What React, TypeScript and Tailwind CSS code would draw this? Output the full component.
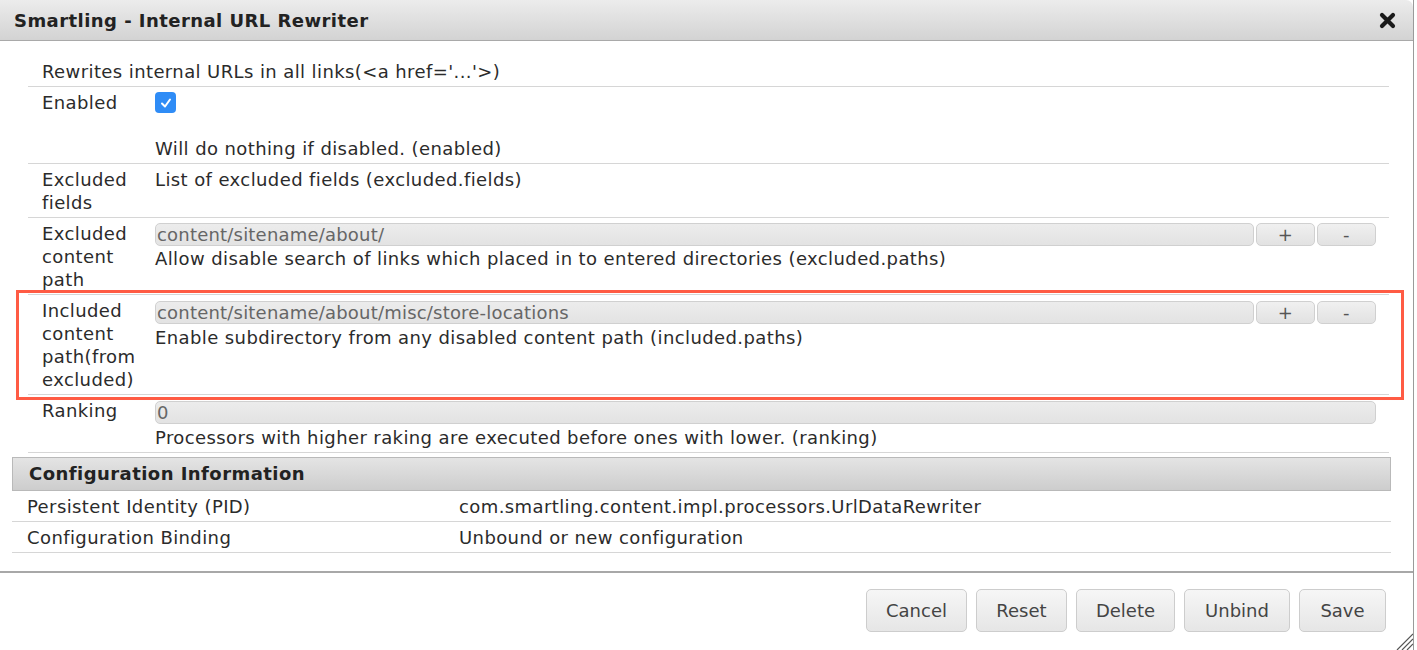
import React from "react";

const font = { fontFamily: '"DejaVu Sans", Verdana, sans-serif' };

function Input({ value }: { value: string }) {
  return (
    <div className="h-[23px] flex-1 rounded-[5px] border border-[#d0d0d0] bg-gradient-to-b from-[#ececec] to-[#e3e3e3] px-[1px] text-[18px] leading-[21px] tracking-[0.2px] text-[#666] whitespace-nowrap overflow-hidden">
      {value}
    </div>
  );
}

function SmallBtn({ label }: { label: string }) {
  return (
    <div className="h-[23px] w-[59px] rounded-[5px] border border-[#d0d0d0] bg-gradient-to-b from-[#f0f0f0] to-[#e2e2e2] text-center text-[18px] leading-[21px] text-[#555]">
      {label}
    </div>
  );
}

function Row({
  label,
  children,
  className = "",
}: {
  label: React.ReactNode;
  children: React.ReactNode;
  className?: string;
}) {
  return (
    <div className={"relative flex border-b border-[#d6d6d6] pt-[4px] pb-[3px] " + className}>
      <div className="w-[127px] shrink-0 pl-[14px] pr-[2px] whitespace-nowrap">{label}</div>
      <div className="flex-1 pr-[13px]">{children}</div>
    </div>
  );
}

function FooterBtn({ label, w }: { label: string; w: string }) {
  return (
    <div
      className={
        "h-[43px] rounded-[5px] border border-[#cdcdcd] bg-gradient-to-b from-[#f6f6f6] to-[#e6e6e6] text-center text-[18px] leading-[41px] text-[#444] " +
        w
      }
    >
      {label}
    </div>
  );
}

export default function App() {
  return (
    <div
      className="h-[650px] w-[1417px] overflow-hidden bg-white text-[18px] leading-[23px] tracking-[0.4px] text-[#2b2b2b]"
      style={font}
    >
      <div className="relative h-[650px] w-[1414px] border-r border-[#9a9a9a]">
        {/* Title bar */}
        <div className="flex h-[41px] items-center justify-between rounded-tr-[7px] border-b border-[#a9a9a9] bg-gradient-to-b from-[#ececec] to-[#d3d3d3] pl-[14px] pr-[17px]">
          <div className="text-[18px] font-bold tracking-[0.45px] text-[#222]">Smartling - Internal URL Rewriter</div>
          <svg width="17" height="17" viewBox="0 0 17 17">
            <path d="M3 3 L14 14 M14 3 L3 14" stroke="#1a1a1a" strokeWidth="4.2" strokeLinecap="round" />
          </svg>
        </div>

        {/* Properties table */}
        <div className="ml-[28px] mr-[24px] mt-[15px]">
          <Row label={null}>
            <div className="-ml-[113px]">Rewrites internal URLs in all links(&lt;a href='...'&gt;)</div>
          </Row>
          <Row label="Enabled">
            <div className="flex h-[23px] items-center">
              <div className="flex h-[21px] w-[21px] items-center justify-center rounded-[4px] bg-[#2f8cf6]">
                <svg width="14" height="14" viewBox="0 0 14 14">
                  <path d="M3 7.5 L6 10.5 L11 3.5" fill="none" stroke="#fff" strokeWidth="2" strokeLinecap="round" strokeLinejoin="round" />
                </svg>
              </div>
            </div>
            <div className="h-[23px]" />
            <div>Will do nothing if disabled. (enabled)</div>
          </Row>
          <Row label={<>Excluded<br />fields</>}>
            <div>List of excluded fields (excluded.fields)</div>
          </Row>
          <Row label={<>Excluded<br />content<br />path</>}>
            <div className="flex gap-[2px] py-[1px]">
              <Input value="content/sitename/about/" />
              <SmallBtn label="+" />
              <SmallBtn label="-" />
            </div>
            <div>Allow disable search of links which placed in to entered directories (excluded.paths)</div>
          </Row>
          <Row label={<>Included<br />content<br />path(from<br />excluded)</>}>
            <div className="flex gap-[2px] py-[2px]">
              <Input value="content/sitename/about/misc/store-locations" />
              <SmallBtn label="+" />
              <SmallBtn label="-" />
            </div>
            <div>Enable subdirectory from any disabled content path (included.paths)</div>
            <div className="pointer-events-none absolute -left-[12px] -right-[15px] -top-[5px] bottom-[-6px] border-[3px] border-[#ff5b44]" />
          </Row>
          <Row label="Ranking">
            <div className="flex py-[2px]">
              <Input value="0" />
            </div>
            <div>Processors with higher raking are executed before ones with lower. (ranking)</div>
          </Row>
        </div>

        {/* Configuration information */}
        <div className="ml-[12px] mr-[22px] mt-[4px]">
          <div className="h-[34px] border border-[#b9b9b9] bg-gradient-to-b from-[#e4e4e4] to-[#cdcdcd] pl-[16px] text-[18px] font-bold leading-[32px] tracking-[0.45px] text-[#222]">
            Configuration Information
          </div>
          <div className="flex h-[31px] items-center border-b border-[#d6d6d6]">
            <div className="w-[447px] pl-[15px]">Persistent Identity (PID)</div>
            <div>com.smartling.content.impl.processors.UrlDataRewriter</div>
          </div>
          <div className="flex h-[31px] items-center border-b border-[#d6d6d6]">
            <div className="w-[447px] pl-[15px]">Configuration Binding</div>
            <div>Unbound or new configuration</div>
          </div>
        </div>

        {/* Footer */}
        <div className="mt-[18px] border-t-2 border-[#a8a8a8] pt-[16px]">
          <div className="flex justify-end gap-[9px] pr-[27px] tracking-normal">
            <FooterBtn label="Cancel" w="w-[101px]" />
            <FooterBtn label="Reset" w="w-[91px]" />
            <FooterBtn label="Delete" w="w-[99px]" />
            <FooterBtn label="Unbind" w="w-[106px]" />
            <FooterBtn label="Save" w="w-[87px]" />
          </div>
        </div>

        {/* resize grip */}
        <svg className="absolute bottom-0 right-0" width="20" height="20" viewBox="0 0 20 20">
          <path d="M4 20 L20 4 M9 20 L20 9 M14 20 L20 14" stroke="#555" strokeWidth="1.2" />
        </svg>
      </div>
    </div>
  );
}
